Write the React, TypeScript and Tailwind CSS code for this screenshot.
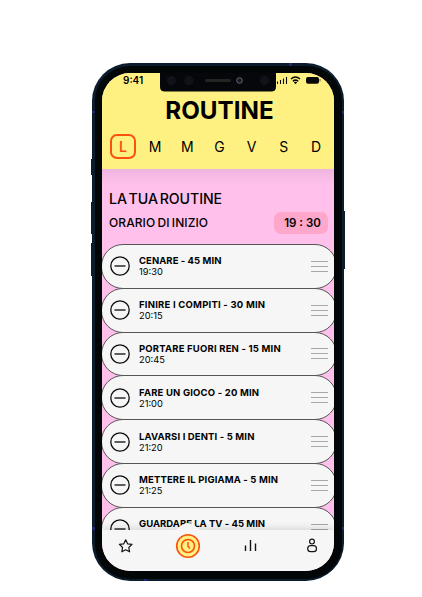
const rows = [
  { title: 'CENARE - 45 MIN', time: '19:30', tracking: 'tracking-[0.06px]' },
  { title: 'FINIRE I COMPITI - 30 MIN', time: '20:15', tracking: 'tracking-[0.22px]' },
  { title: 'PORTARE FUORI REN - 15 MIN', time: '20:45', tracking: 'tracking-[0.19px]' },
  { title: 'FARE UN GIOCO - 20 MIN', time: '21:00', tracking: 'tracking-[0.18px]' },
  { title: 'LAVARSI I DENTI - 5 MIN', time: '21:20', tracking: 'tracking-[0.14px]' },
  { title: 'METTERE IL PIGIAMA - 5 MIN', time: '21:25', tracking: 'tracking-[0.15px]' },
  { title: 'GUARDARE LA TV - 45 MIN', time: '', tracking: 'tracking-[0.02px]' },
];

const days = ['L', 'M', 'M', 'G', 'V', 'S', 'D'];

function Row({ title, time, tracking }: { title: string; time: string; tracking: string }) {
  return (
    <li className="relative -mb-px ml-[-1px] flex h-[44.8px] w-[236px] shrink-0 items-center rounded-[22px] border border-[#555555] bg-[#f6f6f6] pl-[7.6px]">
      <svg className="h-5 w-5 shrink-0" viewBox="0 0 20 20" fill="none" stroke="#0b0b0b" strokeWidth="1.3">
        <circle cx="10" cy="10" r="9.2" />
        <path d="M4.5 10h11" />
      </svg>
      <div className="ml-[9.4px] w-[172px] whitespace-nowrap text-black">
        <div className={`text-[9.5px] font-bold leading-[11px] ${tracking}`}>{title}</div>
        <div className="h-[11px] text-[9.3px] leading-[11px]">{time}</div>
      </div>
      <div className="flex w-[17px] flex-col gap-[4px]">
        <span className="h-px bg-[#a8a8a8]" />
        <span className="h-px bg-[#a8a8a8]" />
        <span className="h-px bg-[#a8a8a8]" />
      </div>
    </li>
  );
}

function StatusBar() {
  return (
    <div className="relative h-[19px]">
      <span className="absolute left-[21px] top-[1px] text-[10px] font-semibold leading-[13px]">9:41</span>
      <svg className="absolute inset-0 h-[19px] w-[232px]" viewBox="0 0 232 19">
        <path d="M55 0h3V14q0 4.5 5 4.5H169q5 0 5-4.5V0Z" fill="#05070a" />
        <circle cx="69.5" cy="7.5" r="4.7" fill="#10121a" />
        <circle cx="87" cy="7.5" r="4.7" fill="#10121a" />
        <circle cx="162.5" cy="7.5" r="4.7" fill="#10121a" />
        <rect x="103" y="6" width="26" height="3" rx="1.5" fill="#242424" />
        <circle cx="137.5" cy="7.5" r="2.8" fill="#111827" stroke="#777d84" strokeWidth="0.8" />
        <path d="M175.5 8.5V11M178.5 7v4M181.500 5.5V11M184.500 4V11" stroke="#080808" strokeWidth="1.1" />
        <g fill="none" stroke="#080808" strokeWidth="1.5">
          <path d="M189 6q4.5-4 9 0M190.8 8.3q2.700-2.400 5.400 0" />
        </g>
        <path d="m191.8 9.200 1.700 2 1.700-2q-1.700-1-3.400 0Z" fill="#080808" />
        <rect x="204" y="4" width="13" height="6.8" rx="2" fill="#080808" />
        <rect x="217.5" y="6" width="1" height="2.5" fill="#777047" />
      </svg>
    </div>
  );
}

export default function App() {
  return (
    <main className="h-[597px] w-[422px] overflow-hidden bg-white pl-[92px] pt-[63px] font-['Inter','Liberation_Sans',sans-serif] text-black">
      <div className="relative h-[518px] w-[252px] rounded-[38px] bg-[#0b1c2c] p-[2.5px]">
        <span className="absolute -left-px top-[96px] h-4 w-1 bg-[#0b1c2c]" />
        <span className="absolute -left-px top-[139px] h-8 w-1 bg-[#0b1c2c]" />
        <span className="absolute -left-px top-[180px] h-[33px] w-1 bg-[#0b1c2c]" />
        <span className="absolute -right-px top-[148px] h-[58px] w-1 bg-[#0b1c2c]" />
        <span className="absolute left-0 top-[48px] h-[2px] w-[3px] bg-[#27256b]" />
        <span className="absolute left-0 top-[464px] h-[3px] w-[3px] bg-[#27256b]" />
        <span className="absolute right-0 top-[48px] h-[3px] w-[3px] bg-[#27256b]" />
        <span className="absolute right-0 top-[464px] h-[3px] w-[3px] bg-[#27256b]" />
        <span className="absolute left-[197px] top-0 h-[3px] w-[3px] bg-[#27256b]" />
        <span className="absolute bottom-0 left-[52px] h-[3px] w-[3px] bg-[#27256b]" />
        <div className="relative h-full rounded-[35px] bg-[#030607] p-[7.5px]">
          <div className="flex h-[498px] w-[232px] flex-col overflow-hidden rounded-[28px] bg-[#ffc1eb]">
            <header className="h-24 shrink-0 bg-[#fff181]">
              <StatusBar />
              <h1 className="mt-[5px] h-[28px] pl-[3px] text-center text-[24.2px] font-bold leading-[28px]">ROUTINE</h1>
              <div className="mt-[9px] flex items-center pl-[8px]">
                {days.map((day, i) => (
                  <span
                    key={i}
                    className={
                      i === 0
                        ? 'mr-[3px] flex h-[25px] w-[26px] items-center justify-center rounded-[7px] border-2 border-[#fa520c] text-[14px] font-semibold text-[#fa520c]'
                        : 'flex h-[25px] w-[32.2px] items-center justify-center text-[14px]'
                    }
                  >
                    {day}
                  </span>
                ))}
              </div>
            </header>
            <section className="h-[75px] shrink-0 bg-[linear-gradient(#efb5df,#ffc1eb_17px)] pl-[7px] pt-[21px]">
              <h2 className="whitespace-nowrap text-[14.2px] font-medium leading-[18px] tracking-[-0.08px] [word-spacing:-2px]">LA TUA ROUTINE</h2>
              <div className="mt-[4px] flex items-center justify-between pr-[6px]">
                <span className="whitespace-nowrap text-[12px] font-medium leading-[18px] tracking-[0.08px] [word-spacing:-1px]">ORARIO DI INIZIO</span>
                <span className="flex h-[22px] w-[54px] items-center justify-center rounded-[7px] bg-[#ffa7cb] pl-[3px] pt-[2px] text-[11.5px] font-semibold">19 : 30</span>
              </div>
            </section>
            <ul className="flex h-[286px] shrink-0 flex-col overflow-hidden">
              {rows.map((row) => <Row key={row.title} {...row} />)}
            </ul>
            <nav className="relative h-[41px] shrink-0 bg-[#f6f6f6] shadow-[0_-2px_7px_rgba(0,0,0,0.12)]">
              <svg className="absolute -top-[7px] left-0 h-[48px] w-[232px]" viewBox="0 0 232 48" fill="none">
                <path d="M71 7q4 0 7-3.5 3.500-3.500 8-3.500t8 3.500q3 3.500 7 3.500v3H71Z" fill="#f6f6f6" />
                <path d="m23.700 16.800 1.900 4 4.400.600-3.200 3.100.8 4.300-3.900-2-3.900 2 .8-4.300-3.200-3.100 4.400-.600Z" stroke="#151515" strokeWidth="1.2" strokeLinejoin="round" />
                <circle cx="86" cy="23" r="11.3" fill="#fff181" stroke="#fa520c" strokeWidth="1.6" />
                <circle cx="86" cy="23" r="6.5" stroke="#fa520c" strokeWidth="1.6" />
                <path d="M86 19v4.200l2 2.400" stroke="#fa520c" strokeWidth="1.5" />
                <path d="M143.500 22.500v5.500M148.500 17v11M153.500 20.500v7.500" stroke="#111" strokeWidth="1.4" />
                <circle cx="210" cy="18.6" r="2.4" stroke="#151515" strokeWidth="1.2" />
                <rect x="205.7" y="22.7" width="8.8" height="6" rx="3" stroke="#151515" strokeWidth="1.2" />
              </svg>
            </nav>
          </div>
        </div>
      </div>
    </main>
  );
}
